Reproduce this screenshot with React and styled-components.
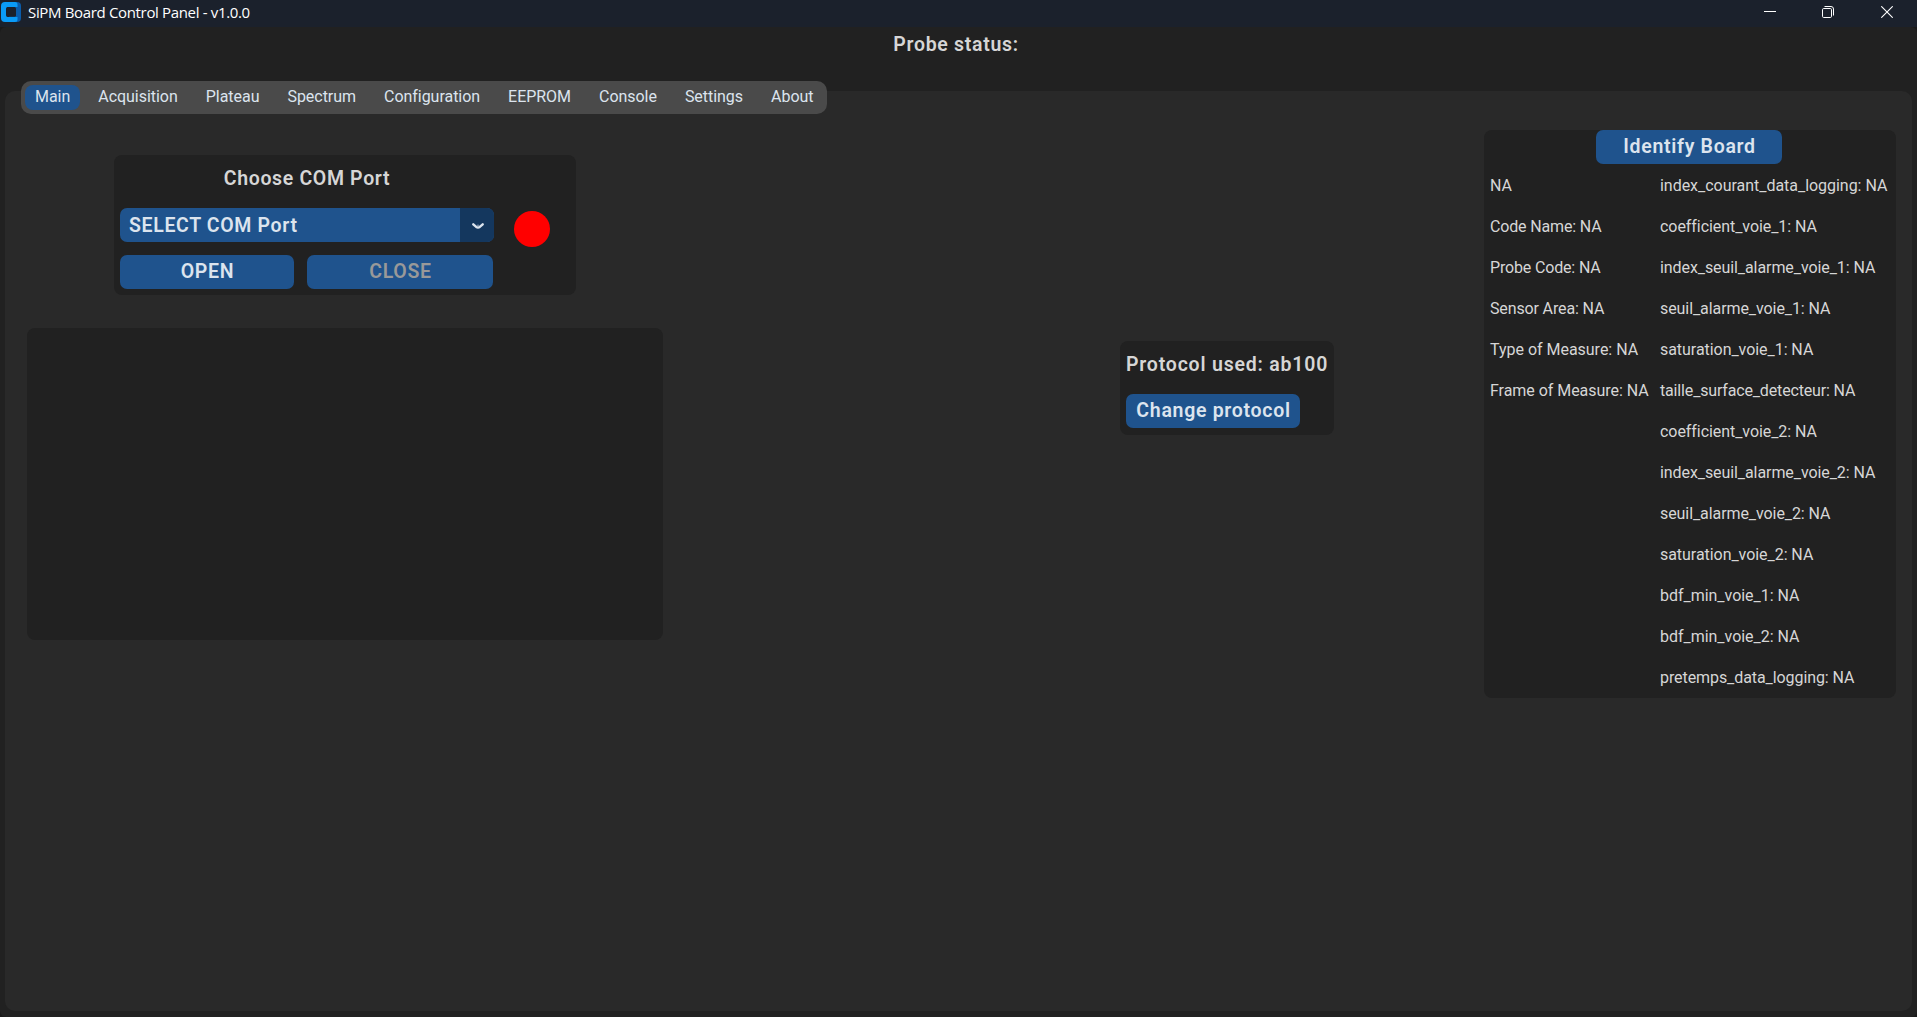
import React from "react";
import styled, { createGlobalStyle } from "styled-components";

const GlobalStyle = createGlobalStyle`
  * {
    box-sizing: border-box;
  }
  body {
    margin: 0;
    background-color: #1a1a1a;
    overflow: hidden;
    font-family: Roboto, "Liberation Sans", sans-serif;
    font-size: 16px;
    color: #dce4ee;
  }
`;

const Window = styled.div`
  display: flex;
  flex-direction: column;
  width: 1917px;
  height: 1017px;
  background-color: #1a1a1a;
`;

const TitleBar = styled.header`
  display: flex;
  align-items: center;
  height: 27px;
  padding: 0 24px 3px 1px;
  background-color: #1b212c;
`;

const Title = styled.span`
  flex: 1;
  margin-left: 7px;
  font-family: "Open Sans", "Noto Sans", sans-serif;
  font-size: 15px;
  line-height: 24px;
  letter-spacing: -0.34px;
  color: #fff;
`;

const WindowButtons = styled.div`
  display: flex;
  gap: 46px;

  svg:last-child {
    margin-left: 1px;
  }
`;

const Client = styled.div`
  flex: 1;
  display: flex;
  flex-direction: column;
  border-radius: 6px;
  background-color: #212121;
`;

const Status = styled.div`
  height: 54px;
  padding: 6px 5px 0 0;
  text-align: center;
  font-size: 19.5px;
  line-height: 24px;
  font-weight: 600;
  letter-spacing: 0.7px;
  color: #d6d6d6;
`;

const TabView = styled.main`
  flex: 1;
  display: flex;
  flex-direction: column;
  margin: 10px 5px 6px;
  border-radius: 10px;
  background-color: #292929;
`;

const TabBar = styled.nav`
  display: flex;
  gap: 8px;
  align-self: flex-start;
  width: 806px;
  height: 33px;
  margin: -10px 0 0 16px;
  padding: 4px;
  border-radius: 10px;
  background-color: #4a4a4a;
`;

const Tab = styled.button`
  height: 25px;
  padding: 0 10px 2px;
  border: none;
  border-radius: 8px;
  background-color: ${({ $active }) => ($active ? "#1f538d" : "transparent")};
  color: #dce4ee;
  font-family: inherit;
  font-size: 16px;
  line-height: 23px;
  letter-spacing: -0.035px;
  white-space: nowrap;
`;

const Content = styled.div`
  display: flex;
  align-items: flex-start;
`;

const LeftColumn = styled.div`
  width: 636px;
  margin: 41px 457px 0 22px;
`;

const Card = styled.section`
  border-radius: 8px;
  background-color: #212121;
`;

const PortCard = styled(Card)`
  display: flex;
  width: 462px;
  height: 140px;
  margin-left: 87px;
  padding: 12px 6px 6px;
`;

const PortForm = styled.div`
  width: 374px;
`;

const Heading = styled.h2`
  margin: 0;
  font-size: 19.5px;
  line-height: 24px;
  font-weight: 600;
  letter-spacing: ${({ $spacing }) => $spacing || 0.65}px;
  text-align: ${({ $align }) => $align || "center"};
  white-space: nowrap;
  color: #d6d6d6;
`;

const Select = styled.div`
  display: flex;
  height: 34px;
  margin: 17px 0 13px;
  border-radius: 7px;
  overflow: hidden;
  background-color: #1f538d;
`;

const SelectValue = styled.span`
  flex: 1;
  padding-left: 9px;
  font-size: 19.5px;
  line-height: 35px;
  font-weight: 600;
  letter-spacing: 0.65px;
`;

const SelectArrow = styled.span`
  display: flex;
  align-items: center;
  justify-content: center;
  width: 34px;
  padding: 2px 0 0 2px;
  background-color: #14375e;
`;

const ButtonRow = styled.div`
  display: flex;
  gap: 13px;
`;

const Button = styled.button`
  display: block;
  width: ${({ $width }) => $width}px;
  height: 34px;
  padding: 0 0 1px 1px;
  border: none;
  border-radius: 7px;
  background-color: #1f538d;
  color: #dce4ee;
  font-family: inherit;
  font-size: 19.5px;
  line-height: 33px;
  font-weight: 600;
  letter-spacing: 0.7px;
  white-space: nowrap;

  &:disabled {
    color: #999;
  }
`;

const Led = styled.div`
  width: 36px;
  height: 36px;
  margin: 44px 0 0 20px;
  border-radius: 50%;
  background-color: #f00;
`;

const LogCard = styled(Card)`
  height: 312px;
  margin-top: 33px;
`;

const ProtocolCard = styled(Card)`
  width: 214px;
  height: 94px;
  margin: 227px 150px 0 0;
  padding: 12px 6px 0;
`;

const ProtocolButton = styled(Button)`
  margin-top: 17px;
`;

const BoardCard = styled(Card)`
  display: flex;
  flex-direction: column;
  align-items: center;
  width: 412px;
  height: 568px;
  margin-top: 16px;
`;

const IdentifyButton = styled(Button)`
  margin-right: 2px;
`;

const Fields = styled.div`
  display: grid;
  grid-template-columns: 170px 1fr;
  width: 100%;
  padding: 1px 0 0 6px;
  color: #d6d6d6;
`;

const Field = styled.div`
  height: 41px;
  line-height: 41px;
  letter-spacing: ${({ $spacing }) => $spacing}px;
  white-space: nowrap;
`;

const tabs = [
  "Main",
  "Acquisition",
  "Plateau",
  "Spectrum",
  "Configuration",
  "EEPROM",
  "Console",
  "Settings",
  "About",
];

const boardInfo = [
  { text: "NA", spacing: 0 },
  { text: "Code Name: NA", spacing: -0.16 },
  { text: "Probe Code: NA", spacing: -0.16 },
  { text: "Sensor Area: NA", spacing: -0.14 },
  { text: "Type of Measure: NA", spacing: -0.02 },
  { text: "Frame of Measure: NA", spacing: -0.04 },
];

const probeInfo = [
  { text: "index_courant_data_logging: NA", spacing: -0.03 },
  { text: "coefficient_voie_1: NA", spacing: -0.06 },
  { text: "index_seuil_alarme_voie_1: NA", spacing: -0.08 },
  { text: "seuil_alarme_voie_1: NA", spacing: -0.08 },
  { text: "saturation_voie_1: NA", spacing: -0.05 },
  { text: "taille_surface_detecteur: NA", spacing: -0.16 },
  { text: "coefficient_voie_2: NA", spacing: -0.06 },
  { text: "index_seuil_alarme_voie_2: NA", spacing: -0.08 },
  { text: "seuil_alarme_voie_2: NA", spacing: -0.08 },
  { text: "saturation_voie_2: NA", spacing: -0.05 },
  { text: "bdf_min_voie_1: NA", spacing: -0.03 },
  { text: "bdf_min_voie_2: NA", spacing: -0.03 },
  { text: "pretemps_data_logging: NA", spacing: -0.08 },
];

const Logo = () => (
  <svg width="20" height="20" viewBox="0 0 20 20">
    <rect x="8" width="12" height="20" rx="4" fill="#0a5cab" />
    <path
      d="M4 0h10a2.5 2.5 0 0 1 2.5 2.5v2.5h-9.5a2 2 0 0 0-2 2v6a2 2 0 0 0 2 2h9.5v2.5a2.5 2.5 0 0 1-2.5 2.5H4a4 4 0 0 1-4-4V4a4 4 0 0 1 4-4z"
      fill="#0a9bf7"
    />
    <rect x="5.5" y="5" width="9.5" height="9.8" rx="1.5" fill="#1b212c" />
  </svg>
);

const Minimize = () => (
  <svg width="12" height="12" viewBox="0 0 12 12">
    <path d="M0 5.5h12" stroke="#fff" />
  </svg>
);

const Restore = () => (
  <svg width="12" height="12" viewBox="0 0 12 12" fill="none" stroke="#fff">
    <rect x="0.5" y="2.5" width="9" height="9" rx="1.2" />
    <path d="M2.5 0.5h6.5a2.5 2.5 0 0 1 2.5 2.5v6.5" />
  </svg>
);

const Close = () => (
  <svg width="12" height="12" viewBox="0 0 12 12">
    <path d="M0.3 0.3l11.4 11.4M11.7 0.3L0.3 11.7" stroke="#fff" strokeWidth="1.1" />
  </svg>
);

const Arrow = () => (
  <svg width="12" height="6" viewBox="0 0 12 6">
    <path
      d="M1.3 1.3L4.2 3.9Q6 5.1 7.8 3.9L10.7 1.3"
      fill="none"
      stroke="#dce4ee"
      strokeWidth="2.4"
      strokeLinecap="round"
    />
    <path d="M4.8 2.6L6 1.6L7.2 2.6z" fill="#dce4ee" />
  </svg>
);

const App = () => (
  <>
    <GlobalStyle />
    <Window>
      <TitleBar>
        <Logo />
        <Title>SiPM Board Control Panel - v1.0.0</Title>
        <WindowButtons>
          <Minimize />
          <Restore />
          <Close />
        </WindowButtons>
      </TitleBar>
      <Client>
        <Status>Probe status:</Status>
        <TabView>
          <TabBar>
            {tabs.map((tab) => (
              <Tab key={tab} $active={tab === "Main"}>{tab}</Tab>
            ))}
          </TabBar>
          <Content>
            <LeftColumn>
              <PortCard>
                <PortForm>
                  <Heading>Choose COM Port</Heading>
                  <Select>
                    <SelectValue>SELECT COM Port</SelectValue>
                    <SelectArrow><Arrow /></SelectArrow>
                  </Select>
                  <ButtonRow>
                    <Button $width={174}>OPEN</Button>
                    <Button $width={186} disabled>CLOSE</Button>
                  </ButtonRow>
                </PortForm>
                <Led />
              </PortCard>
              <LogCard />
            </LeftColumn>
            <ProtocolCard>
              <Heading $align="left" $spacing={0.8}>Protocol used: ab100</Heading>
              <ProtocolButton $width={174}>Change protocol</ProtocolButton>
            </ProtocolCard>
            <BoardCard>
              <IdentifyButton $width={186}>Identify Board</IdentifyButton>
              <Fields>
                <div>
                  {boardInfo.map(({ text, spacing }) => (
                    <Field key={text} $spacing={spacing}>{text}</Field>
                  ))}
                </div>
                <div>
                  {probeInfo.map(({ text, spacing }) => (
                    <Field key={text} $spacing={spacing}>{text}</Field>
                  ))}
                </div>
              </Fields>
            </BoardCard>
          </Content>
        </TabView>
      </Client>
    </Window>
  </>
);

export default App;
